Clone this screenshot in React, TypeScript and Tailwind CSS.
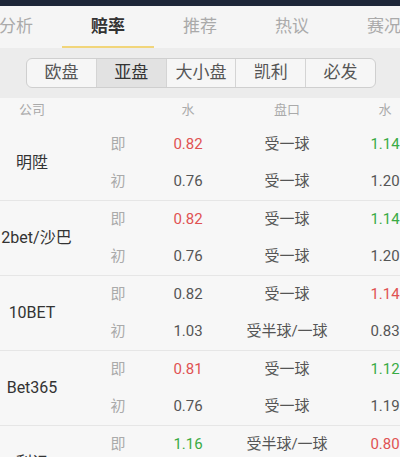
import React from 'react';

type Row = {
  company: string;
  live: [string, string, string];
  init: [string, string, string];
  liveColors: [string, string];
};

const RED = 'text-[#e05252]';
const GREEN = 'text-[#3aab45]';
const PLAIN = 'text-[#555]';

const rows: Row[] = [
  { company: '明陞', live: ['0.82', '受一球', '1.14'], init: ['0.76', '受一球', '1.20'], liveColors: [RED, GREEN] },
  { company: '12bet/沙巴', live: ['0.82', '受一球', '1.14'], init: ['0.76', '受一球', '1.20'], liveColors: [RED, GREEN] },
  { company: '10BET', live: ['0.82', '受一球', '1.14'], init: ['1.03', '受半球/一球', '0.83'], liveColors: [PLAIN, RED] },
  { company: 'Bet365', live: ['0.81', '受一球', '1.12'], init: ['0.76', '受一球', '1.19'], liveColors: [RED, GREEN] },
  { company: '利记', live: ['1.16', '受半球/一球', '0.80'], init: ['1.08', '受半球/一球', '0.80'], liveColors: [GREEN, RED] },
];

const tabs = ['分析', '赔率', '推荐', '热议', '赛况'];
const segments = ['欧盘', '亚盘', '大小盘', '凯利', '必发'];

const GRID = 'grid grid-cols-[64px_76px_122px_74px]';

function SubRow({ label, values, colors }: { label: string; values: [string, string, string]; colors: [string, string] }) {
  return (
    <div className={`${GRID} h-[37px] items-center text-[15px] text-center whitespace-nowrap`}>
      <span className="text-[#aaa]">{label}</span>
      <span className={colors[0]}>{values[0]}</span>
      <span className="text-[#555]">{values[1]}</span>
      <span className={colors[1]}>{values[2]}</span>
    </div>
  );
}

export default function App() {
  return (
    <div
      className="w-[400px] h-[457px] overflow-hidden bg-[#f7f7f7]"
      style={{ fontFamily: 'Roboto, "Noto Sans CJK SC", sans-serif' }}
    >
      {/* 状态栏 */}
      <div className="h-[6px] bg-[#1d2638]" />

      {/* 顶部标签，横向滚动后的位置 */}
      <div className="h-[42px] bg-[#f5f5f5] overflow-hidden">
        <div className="flex h-full ml-[-30px]">
          {tabs.map((t, i) => (
            <div key={t} className="relative w-[92px] shrink-0 flex items-center justify-center">
              <span className={i === 1 ? 'text-[17px] font-bold text-[#333]' : 'text-[17px] text-[#aaa]'}>{t}</span>
              {i === 1 && <div className="absolute bottom-0 left-0 right-0 h-[2px] bg-[#f1d57a]" />}
            </div>
          ))}
        </div>
      </div>

      {/* 盘口类型切换 */}
      <div className="h-[50px] bg-[#ececec] flex items-center pl-[26px]">
        <div className="flex w-[350px] h-[30px] rounded-[6px] border border-[#cfcfcf] overflow-hidden bg-[#f6f6f6]">
          {segments.map((s, i) => (
            <div
              key={s}
              className={`flex-1 flex items-center justify-center text-[17px] ${i > 0 ? 'border-l border-[#d4d4d4]' : ''} ${
                i === 1 ? 'bg-[#e2e2e2] text-[#333]' : 'text-[#555]'
              }`}
            >
              {s}
            </div>
          ))}
        </div>
      </div>

      {/* 表头 */}
      <div className="flex h-[28px] pt-[2px] text-[13px] text-[#aaa] text-center">
        <div className="w-[64px] shrink-0">公司</div>
        <div className="pl-[22px]">
          <div className={GRID}>
            <span />
            <span>水</span>
            <span>盘口</span>
            <span>水</span>
          </div>
        </div>
      </div>

      {/* 赔率列表 */}
      {rows.map(r => (
        <div key={r.company} className="flex h-[75px] border-b border-[#e6e6e6]">
          <div className="w-[64px] shrink-0 flex items-center justify-center">
            <span className="text-[16px] text-[#333] whitespace-nowrap">{r.company}</span>
          </div>
          <div className="pl-[22px]">
            <SubRow label="即" values={r.live} colors={r.liveColors} />
            <SubRow label="初" values={r.init} colors={[PLAIN, PLAIN]} />
          </div>
        </div>
      ))}
    </div>
  );
}
